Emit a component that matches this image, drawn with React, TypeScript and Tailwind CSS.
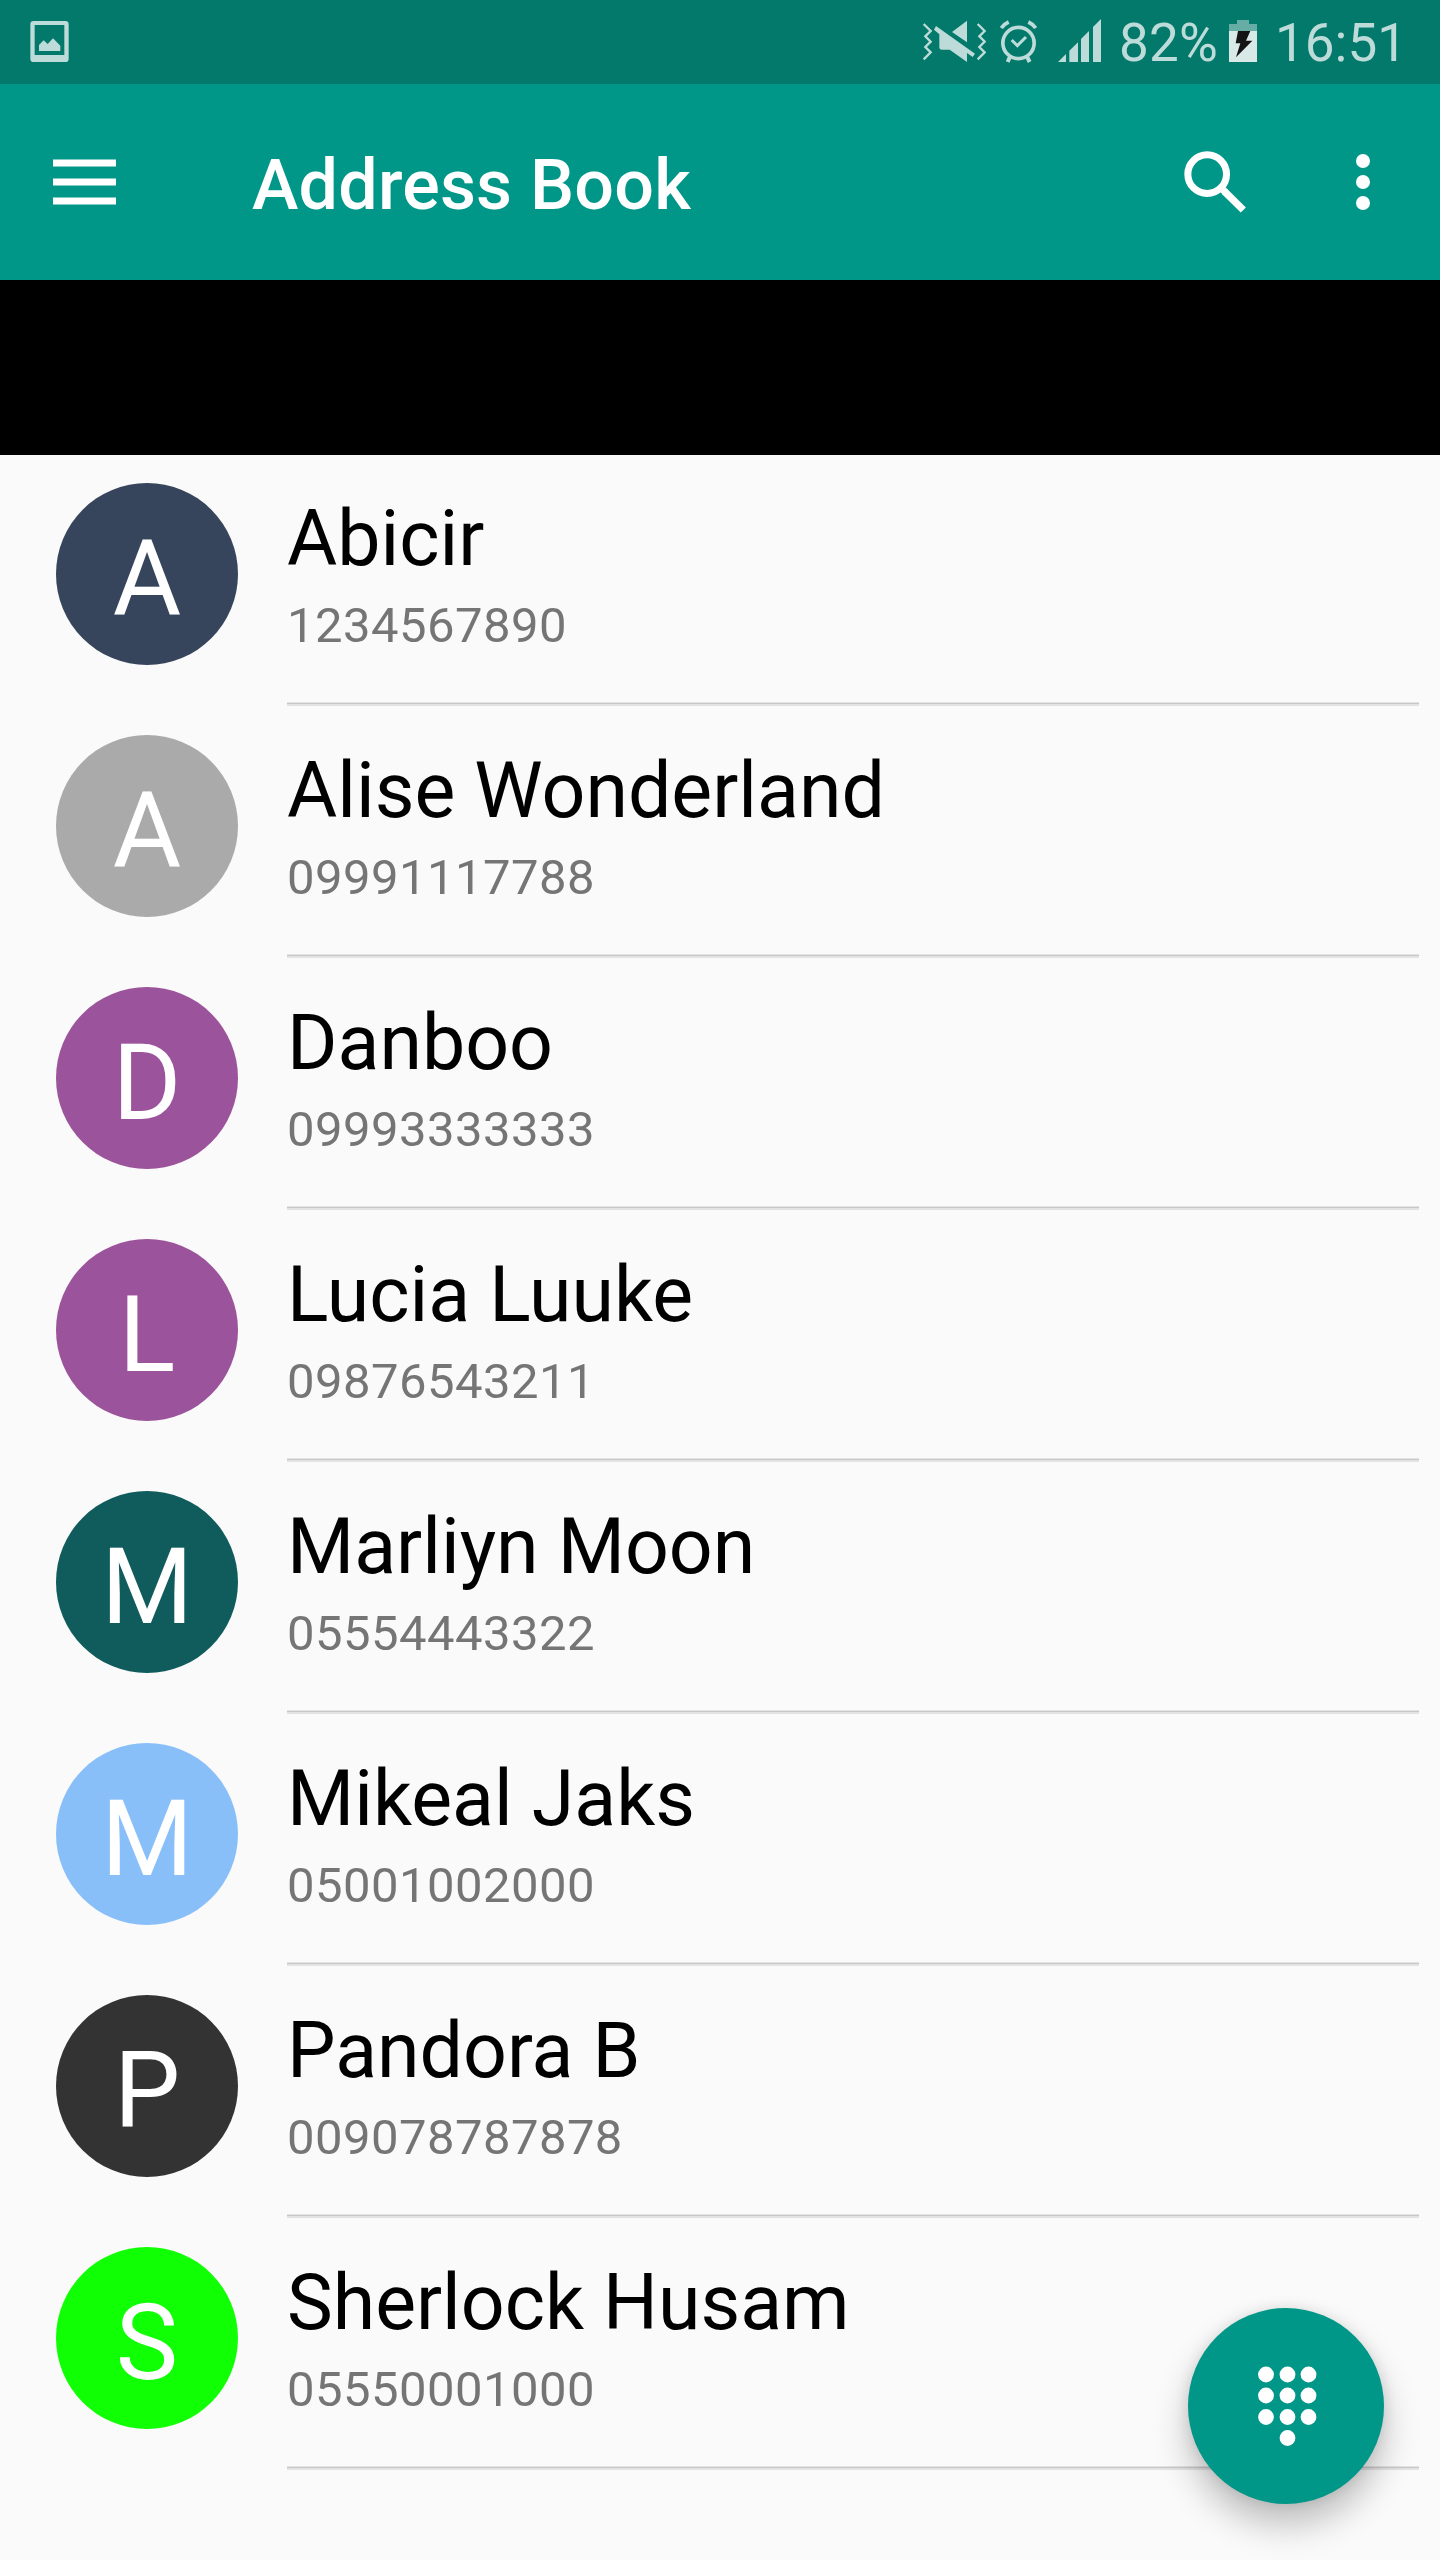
import React from 'react';

interface Contact {
  name: string;
  phone: string;
  color: string;
}

const contacts: Contact[] = [
  { name: 'Abicir', phone: '1234567890', color: 'bg-[#36455b]' },
  { name: 'Alise Wonderland', phone: '09991117788', color: 'bg-[#aaaaaa]' },
  { name: 'Danboo', phone: '09993333333', color: 'bg-[#9b539c]' },
  { name: 'Lucia Luuke', phone: '09876543211', color: 'bg-[#9b539c]' },
  { name: 'Marliyn Moon', phone: '05554443322', color: 'bg-[#105b5b]' },
  { name: 'Mikeal Jaks', phone: '05001002000', color: 'bg-[#89bff8]' },
  { name: 'Pandora B', phone: '009078787878', color: 'bg-[#333333]' },
  { name: 'Sherlock Husam', phone: '05550001000', color: 'bg-[#11ff05]' },
];

const StatusBar = () => (
  <div className="flex h-[84px] items-start bg-[#02796b] pl-[30px] text-[53px] leading-[62px] text-[#bddbd8]">
    {/* Screenshot notification */}
    <svg className="mt-5 h-[42px] w-10" viewBox="90 60 120 126" fill="currentColor">
      <path
        fillRule="evenodd"
        d="M101 63H196Q206 63 206 73V176Q206 186 196 186H101Q91 186 91 176V73Q91 63 101 63ZM104 75V165H193V75Z"
      />
      <path d="M117 153V135L131 121L143 132L159 115L181 137V153Z" />
    </svg>

    {/* Sound off + vibrate */}
    <svg className="mt-[18px] ml-auto h-[45px] w-16" viewBox="66 54 192 135" fill="currentColor">
      <path
        d="M71 72L92 93L76 109L92 125L76 141L92 157L71 178M233 72L254 93L238 109L254 125L238 141L254 157L233 178"
        fill="none"
        stroke="currentColor"
        strokeWidth="7"
      />
      <path d="M201 62V127L156 96Z" />
      <path d="M108 78L225 161L218 171L201 159V186L149 149H126Q118 149 118 141V103L102 89Z" />
    </svg>

    {/* Alarm */}
    <svg className="mt-[18px] ml-[14px] h-[45px] w-[37px]" viewBox="300 54 111 135" fill="none" stroke="currentColor">
      <circle cx="355.500" cy="129" r="47" strokeWidth="11" />
      <path d="M335 120L352 137L378 111" strokeWidth="9" />
      <path d="M330 170L323 186M381 170L389 186" strokeWidth="12" />
      <path d="M304 84Q311 73 326 66M407 84Q400 73 385 66" strokeWidth="11" />
    </svg>

    {/* Signal */}
    <svg className="mt-[18px] ml-[21px] h-[45px] w-[43px]" viewBox="474 54 129 135" fill="currentColor">
      <path d="M474 186L498 162V186ZM508 186V152L534 127V186ZM543 186V117L567 93V186ZM579 186V81L603 57V186Z" />
    </svg>

    <span className="mt-3 ml-[18px] w-[101px] whitespace-nowrap tracking-[0.2px]">82%</span>

    {/* Battery */}
    <svg className="mt-[18px] ml-[9px] h-[45px] w-7" viewBox="237 54 84 135">
      <path d="M261 60H297V72H321V93H237V72H261Z" fill="#66aea5" />
      <path d="M237 93H321V186H237Z" fill="#d8e9e7" />
      <path d="M264 93H301L288 122H307L258 172L271 130H257Z" fill="#141414" />
    </svg>

    <span className="mt-3 mr-[36px] ml-[18px] w-[129px] whitespace-nowrap">16:51</span>
  </div>
);

const Toolbar = () => (
  <header className="flex h-[196px] items-center bg-[#009788] pl-[53px] text-white">
    <svg className="h-[46px] w-[64px]" viewBox="0 0 64 46" fill="currentColor">
      <path d="M0 .5H63V7.500H0ZM0 19.500H63V26.500H0ZM0 38.500H63V45.500H0Z" />
    </svg>
    <h1 className="mt-1.5 ml-[135px] text-[70px] leading-[82px] font-medium tracking-[0.2px]">Address Book</h1>
    <svg className="ml-auto h-[62px] w-[62px]" viewBox="132 150 186 186" fill="none" stroke="currentColor">
      <circle cx="201.500" cy="219.500" r="58" strokeWidth="21" />
      <path d="M249 266L257 275" strokeWidth="21" />
      <path d="M254 272L310 327" strokeWidth="22" />
    </svg>
    <svg className="mr-[70px] ml-[110px] h-[56px] w-[14px]" viewBox="0 0 14 56" fill="currentColor">
      <circle cx="7" cy="7" r="7" />
      <circle cx="7" cy="28" r="7" />
      <circle cx="7" cy="49" r="7" />
    </svg>
  </header>
);

const ContactRow = ({ contact }: { contact: Contact }) => (
  <li className="flex h-[252px] pl-14">
    <div
      className={`mt-7 flex size-[182px] shrink-0 items-center justify-center rounded-full pt-[10px] text-[105px] leading-[123px] text-white ${contact.color}`}
    >
      {contact.name[0]}
    </div>
    <div className="mr-[21px] ml-[49px] flex h-[251px] flex-1 flex-col pt-[39px]">
      <p className="text-[77px] leading-[90px] text-black">{contact.name}</p>
      <p className="mt-[13px] text-[49px] leading-[58px] tracking-[0.45px] text-[#757575]">{contact.phone}</p>
      <div className="mt-auto h-1 border-t border-b-2 border-[#e3e3e3] bg-[#c8c8c8]" />
    </div>
  </li>
);

const dialDots = [
  [78, 66.5], [99.5, 66.5], [120.500, 66.5],
  [78, 87.500], [99.5, 87.500], [120.500, 87.500],
  [78, 109], [99.5, 109], [120.500, 109],
  [99.5, 130],
];

const DialButton = () => (
  <button
    aria-label="Open dialpad"
    className="absolute top-[2308px] left-[1188px] size-[196px] rounded-full bg-[#009788] shadow-[0_21px_35px_rgba(0,0,0,0.24),0_0_14px_rgba(0,0,0,0.1)]"
  >
    <svg className="size-full" viewBox="0 0 196 196" fill="#fff">
      {dialDots.map(([x, y]) => (
        <circle key={`${x}-${y}`} cx={x} cy={y} r="7.900" />
      ))}
    </svg>
  </button>
);

const App = () => (
  <div className="relative h-[2560px] w-[1440px] overflow-hidden bg-[#fafafa] font-[Roboto,sans-serif]">
    <StatusBar />
    <Toolbar />
    <div className="h-[175px] bg-black" />
    <ul>
      {contacts.map((contact) => (
        <ContactRow key={contact.name} contact={contact} />
      ))}
    </ul>
    <DialButton />
  </div>
);

export default App;
